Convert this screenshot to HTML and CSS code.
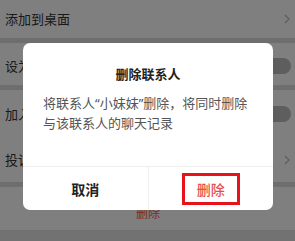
FILE: index.html
```html
<!DOCTYPE html>
<html lang="zh-CN">
<head>
<meta charset="utf-8">
<link rel="stylesheet" href="styles.css">
</head>
<body>
<div class="page">
  <div class="settings">
    <div class="row row-1"><span class="label">添加到桌面</span><svg class="chev" width="6" height="10" viewBox="0 0 6 10"><path d="M1 1l4 4-4 4" fill="none" stroke="#bbb" stroke-width="1.2"/></svg></div>
    <div class="band"></div>
    <div class="row row-2"><span class="label">设为星标朋友</span><span class="toggle"></span></div>
    <div class="band"></div>
    <div class="row row-3"><span class="label">加入黑名单</span><span class="toggle"></span></div>
    <div class="row row-4"><span class="label">投诉</span><svg class="chev" width="6" height="10" viewBox="0 0 6 10"><path d="M1 1l4 4-4 4" fill="none" stroke="#bbb" stroke-width="1.2"/></svg></div>
    <div class="band"></div>
    <div class="row row-5"><span class="danger">删除</span></div>
    <div class="bottom"></div>
  </div>
  <div class="mask"></div>
  <div class="dialog">
    <div class="title">删除联系人</div>
    <div class="body">将联系人“小妹妹”删除，将同时删除与该联系人的聊天记录</div>
    <div class="actions">
      <div class="btn cancel">取消</div>
      <div class="btn confirm"><span class="mark">删除</span></div>
    </div>
  </div>
</div>
</body>
</html>
```

FILE: styles.css
```css
* { box-sizing: border-box; }
html, body { margin: 0; padding: 0; }
body {
  width: 295px;
  height: 241px;
  overflow: hidden;
  font-family: "Noto Sans CJK SC", "Noto Sans", sans-serif;
  background: #fff;
}
.page { position: relative; width: 295px; height: 241px; overflow: hidden; }
.settings { display: flex; flex-direction: column; }
.row {
  display: flex;
  align-items: center;
  justify-content: space-between;
  background: #fff;
  padding: 0 4px 0 5px;
  font-size: 13px;
  color: #333;
}
.row-1 { height: 38px; }
.row-2 { height: 42px; padding-top: 3px; }
.row-3 { height: 47px; }
.row-4 { height: 45px; }
.row-5 { height: 43px; justify-content: center; align-items: flex-start; padding-top: 19px; }
.band { height: 5px; background: #dcdcdc; }
.bottom { height: 11px; background: #e4e4e4; }
.label { line-height: 16px; }
.chev { margin-right: 1px; }
.toggle {
  width: 32px;
  height: 16px;
  border-radius: 8px;
  background: #bdbdbd;
}
.danger { color: #fa5151; font-size: 12px; line-height: 14px; }
.mask {
  position: absolute;
  inset: 0;
  background: rgba(0, 0, 0, 0.5);
}
.dialog {
  position: absolute;
  left: 23px;
  top: 43px;
  width: 250px;
  height: 167px;
  background: #fff;
  border-radius: 7px;
  display: flex;
  flex-direction: column;
}
.title {
  margin-top: 21px;
  text-align: center;
  font-size: 13px;
  font-weight: 700;
  line-height: 20px;
  color: #222;
}
.body {
  margin-top: 10px;
  padding: 0 18px 0 20px;
  font-family: "Noto Sans", "Noto Sans CJK SC", sans-serif;
  font-size: 13px;
  line-height: 19.5px;
  color: #555;
  height: 72px;
}
.actions {
  display: flex;
  border-top: 1px solid #eeeeee;
  height: 44px;
}
.btn {
  flex: 1;
  display: flex;
  align-items: center;
  justify-content: center;
  font-size: 14px;
}
.cancel { color: #222; font-weight: 700; border-right: 1px solid #eeeeee; }
.confirm { color: #e5504b; font-weight: 500; padding-top: 1px; }
.mark {
  border: 3px solid #e8121c;
  padding: 0 12px;
  line-height: 26px;
}
```
